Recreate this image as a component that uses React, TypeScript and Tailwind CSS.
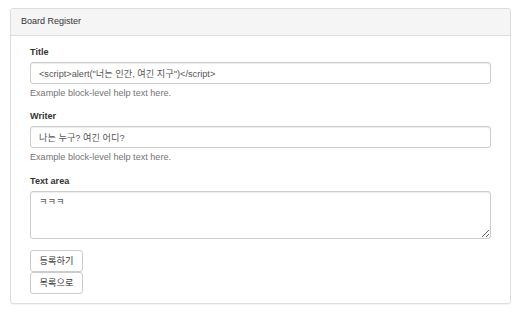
import React from 'react';

const font = { fontFamily: '"Liberation Sans", Arial, "Noto Sans CJK KR", sans-serif' };

const App: React.FC = () => {
  return (
    <div className="pt-[8px] pl-[10px] bg-white min-h-[314px]" style={font}>
      <div className="w-[501px] border border-[#ddd] rounded-[3px] bg-white shadow-[0_1px_1px_rgba(0,0,0,0.05)]">
        {/* heading */}
        <div className="h-[27px] px-[10px] flex items-center bg-[#f5f5f5] border-b border-[#ddd] rounded-t-[3px] text-[9px] text-[#333]">
          Board Register
        </div>

        {/* body */}
        <form className="px-[19px] pt-[10px] pb-[9px] text-[9.1px] leading-[13px] text-[#333]" onSubmit={(e) => e.preventDefault()}>
          <label className="block font-bold h-[13px] mb-[3px]">Title</label>
          <input
            defaultValue={'<script>alert("너는 인간, 여긴 지구")</script>'}
            className="block w-full h-[22px] px-[8px] border border-[#ccc] rounded-[3px] text-[9.2px] text-[#555] shadow-[inset_0_1px_1px_rgba(0,0,0,0.075)] outline-none"
            style={font}
          />
          <p className="mt-[3px] h-[13px] text-[#737373]">Example block-level help text here.</p>

          <label className="block font-bold h-[13px] mt-[10px] mb-[3px]">Writer</label>
          <input
            defaultValue="나는 누구? 여긴 어디?"
            className="block w-full h-[22px] px-[8px] border border-[#ccc] rounded-[3px] text-[9.2px] text-[#555] shadow-[inset_0_1px_1px_rgba(0,0,0,0.075)] outline-none"
            style={font}
          />
          <p className="mt-[3px] h-[13px] text-[#737373]">Example block-level help text here.</p>

          <label className="block font-bold h-[13px] mt-[11px] mb-[3px]">Text area</label>
          <textarea
            defaultValue="ㅋㅋㅋ"
            className="block w-full h-[48px] px-[8px] pt-[4px] border border-[#ccc] rounded-[3px] text-[9.2px] leading-[13px] text-[#555] shadow-[inset_0_1px_1px_rgba(0,0,0,0.075)] outline-none"
            style={font}
          />

          <div className="mt-[11px] flex flex-col items-start">
            <button className="h-[22px] w-[53px] border border-[#ccc] rounded-[3px] bg-white text-[9.2px] text-[#333]" style={font}>
              등록하기
            </button>
            <button className="h-[22px] w-[53px] border border-[#ccc] rounded-[3px] bg-white text-[9.2px] text-[#333]" style={font}>
              목록으로
            </button>
          </div>
        </form>
      </div>
    </div>
  );
};

export default App;
